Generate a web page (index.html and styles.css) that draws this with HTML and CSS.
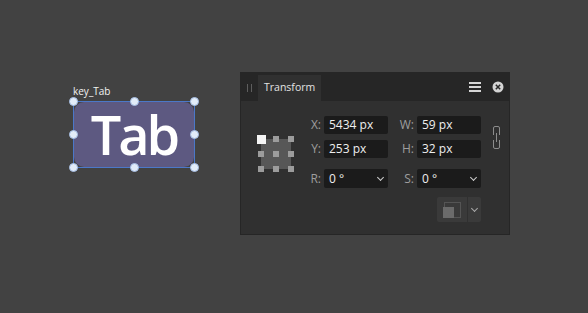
FILE: index.html
```html
<!DOCTYPE html>
<html lang="en">
<head>
    <meta charset="UTF-8">
    <title>Transform</title>
    <link rel="stylesheet" href="styles.css">
</head>
<body>
<div class="canvas">
    <div class="layer">
        <div class="layer-name">key_Tab</div>
        <div class="selection">
            <div class="key-shape">Tab</div>
            <span class="handle h-tl"></span>
            <span class="handle h-tc"></span>
            <span class="handle h-tr"></span>
            <span class="handle h-ml"></span>
            <span class="handle h-mr"></span>
            <span class="handle h-bl"></span>
            <span class="handle h-bc"></span>
            <span class="handle h-br"></span>
        </div>
    </div>

    <div class="panel">
        <div class="panel-head">
            <span class="grip"></span>
            <div class="tab">Transform</div>
            <div class="head-tools">
                <svg class="menu-icon" width="12" height="10" viewBox="0 0 12 10">
                    <rect x="0" y="0" width="12" height="2" fill="#d6d6d6"/>
                    <rect x="0" y="4" width="12" height="2" fill="#d6d6d6"/>
                    <rect x="0" y="8" width="12" height="2" fill="#d6d6d6"/>
                </svg>
                <svg class="close-icon" width="12" height="12" viewBox="0 0 12 12">
                    <circle cx="6" cy="6" r="5.5" fill="#d4d4d4"/>
                    <path d="M3.8 3.8 L8.2 8.2 M8.2 3.8 L3.8 8.2" stroke="#2a2a2a" stroke-width="1.5"/>
                </svg>
            </div>
        </div>

        <div class="panel-body">
            <div class="anchor">
                <svg width="38" height="38" viewBox="0 0 38 38">
                    <rect x="4" y="4" width="30" height="30" fill="#575757"/>
                    <rect x="16" y="1" width="6" height="6" fill="#9c9c9c"/>
                    <rect x="31" y="1" width="6" height="6" fill="#9c9c9c"/>
                    <rect x="1" y="16" width="6" height="6" fill="#9c9c9c"/>
                    <rect x="16" y="16" width="6" height="6" fill="#9c9c9c"/>
                    <rect x="31" y="16" width="6" height="6" fill="#9c9c9c"/>
                    <rect x="1" y="31" width="6" height="6" fill="#9c9c9c"/>
                    <rect x="16" y="31" width="6" height="6" fill="#9c9c9c"/>
                    <rect x="31" y="31" width="6" height="6" fill="#9c9c9c"/>
                    <rect x="0" y="0" width="9" height="9" fill="#f4f4f4"/>
                </svg>
            </div>

            <label class="lbl r1 c1">X:</label>
            <div class="field r1 c2">5434 px</div>
            <label class="lbl r1 c3">W:</label>
            <div class="field r1 c4">59 px</div>

            <label class="lbl r2 c1">Y:</label>
            <div class="field r2 c2">253 px</div>
            <label class="lbl r2 c3">H:</label>
            <div class="field r2 c4">32 px</div>

            <div class="link">
                <svg width="9" height="25" viewBox="0 0 9 25">
                    <path d="M1.5 10 V3 Q1.5 1.5 3 1.5 H6 Q7.5 1.5 7.5 3 V10 M1.5 15 V22 Q1.5 23.5 3 23.5 H6 Q7.5 23.5 7.5 22 V15 M4.5 8 V17" fill="none" stroke="#8c8c8c" stroke-width="1"/>
                </svg>
            </div>

            <label class="lbl r3 c1">R:</label>
            <div class="field select r3 c2">0 °<span class="chev"></span></div>
            <label class="lbl r3 c3">S:</label>
            <div class="field select r3 c4">0 °<span class="chev"></span></div>

            <div class="split-btn">
                <div class="btn-main">
                    <svg width="18" height="16" viewBox="0 0 18 16">
                        <rect x="1.5" y="0.5" width="16" height="15" fill="none" stroke="#555" stroke-width="1"/>
                        <rect x="0" y="5" width="11" height="11" fill="#6b6b6b"/>
                    </svg>
                </div>
                <div class="btn-drop"><span class="chev"></span></div>
            </div>
        </div>
    </div>
</div>
</body>
</html>
```

FILE: styles.css
```css
body {
    margin: 0;
    background: #424242;
    font-family: 'Open Sans', 'Noto Sans', sans-serif;
    color: #e6e6e6;
}

.canvas {
    display: flex;
    align-items: flex-start;
    padding: 72px 0 0 73px;
}

/* layer on the canvas */

.layer {
    width: 122px;
    margin-top: 13px;
}

.layer-name {
    font-size: 10px;
    line-height: 12px;
    color: #f2f2f2;
    margin-bottom: 4px;
}

.selection {
    position: relative;
    height: 65px;
    border: 1px solid #4b78c8;
}

.key-shape {
    height: 100%;
    background: #5d5981;
    border-radius: 10px;
    color: #fff;
    font-size: 54px;
    font-weight: 600;
    line-height: 64px;
    letter-spacing: -3px;
    text-align: center;
}

.handle {
    position: absolute;
    width: 9px;
    height: 9px;
    border-radius: 50%;
    background: #e2ecf8;
    border: 1px solid #a4bde4;
    box-sizing: border-box;
}

.h-tl, .h-tc, .h-tr { top: -5px; }
.h-ml, .h-mr { top: 28px; }
.h-bl, .h-bc, .h-br { bottom: -5px; }
.h-tl, .h-ml, .h-bl { left: -5px; }
.h-tc, .h-bc { left: 56px; }
.h-tr, .h-mr, .h-br { right: -5px; }

/* transform panel */

.panel {
    width: 268px;
    margin-left: 45px;
    background: #303030;
    border: 1px solid #262626;
}

.panel-head {
    display: flex;
    align-items: stretch;
    height: 28px;
    background: #262626;
}

.grip {
    width: 3px;
    height: 8px;
    margin: 11px 6px 0 6px;
    border-left: 1px solid #5e5e5e;
    border-right: 1px solid #5e5e5e;
}

.tab {
    margin-top: 2px;
    padding: 0 6px;
    background: #303030;
    font-size: 10.5px;
    line-height: 24px;
    color: #e2e2e2;
}

.head-tools {
    margin-left: auto;
    display: flex;
    align-items: center;
    gap: 11px;
    padding-right: 5px;
}

.panel-body {
    display: grid;
    grid-template-columns: 46px 21px 64px 8px 21px 64px 1fr;
    grid-template-rows: 18px 18px 24px 28px;
    row-gap: 6px;
    padding: 15px 0 12px 16px;
}

.anchor {
    grid-column: 1;
    grid-row: 1 / 4;
    align-self: center;
    padding-top: 3px;
}

.anchor svg { display: block; }

.lbl {
    align-self: end;
    padding-right: 3px;
    text-align: right;
    font-size: 12px;
    line-height: 18px;
    color: #9e9e9e;
}

.field {
    align-self: end;
    height: 18px;
    padding-left: 5px;
    background: #1b1b1b;
    border-radius: 2px;
    font-size: 12px;
    line-height: 18px;
    color: #efefef;
}

.select {
    position: relative;
    height: 19px;
    line-height: 19px;
}

.r1 { grid-row: 1; }
.r2 { grid-row: 2; }
.r3 { grid-row: 3; }
.c1 { grid-column: 2; }
.c2 { grid-column: 3; }
.c3 { grid-column: 5; }
.c4 { grid-column: 6; }

.chev {
    position: absolute;
    right: 5px;
    top: 6px;
    width: 4px;
    height: 4px;
    border-right: 1.5px solid #cfcfcf;
    border-bottom: 1.5px solid #cfcfcf;
    transform: rotate(45deg);
}

.link {
    grid-column: 7;
    grid-row: 1 / 3;
    align-self: center;
    padding-left: 11px;
}

.link svg { display: block; }

.split-btn {
    grid-row: 4;
    grid-column: 6;
    align-self: end;
    display: flex;
    height: 25px;
    margin-left: 20px;
    gap: 1px;
}

.btn-main {
    width: 30px;
    background: #3a3a3a;
    border-radius: 2px 0 0 2px;
    display: flex;
    align-items: center;
    justify-content: center;
}

.btn-drop {
    position: relative;
    flex: 1;
    background: #3a3a3a;
    border-radius: 0 2px 2px 0;
}

.btn-drop .chev {
    right: 4px;
    top: 9px;
    border-color: #a8a8a8;
}
```
